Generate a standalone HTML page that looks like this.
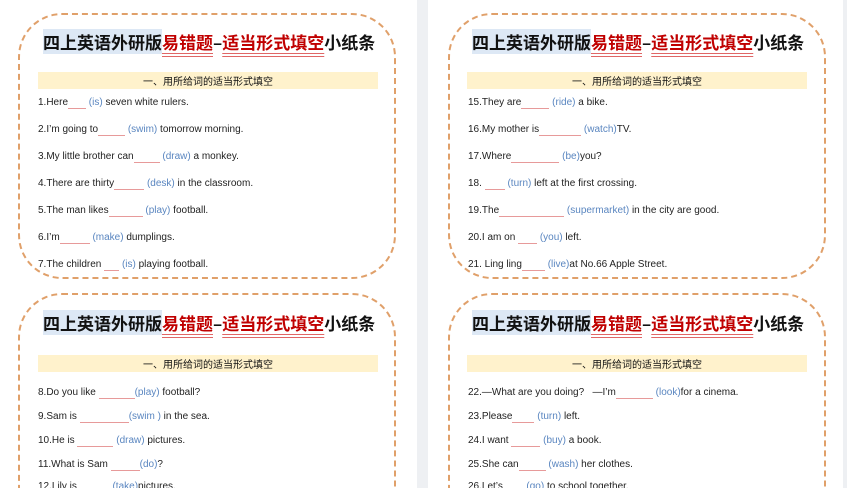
<!DOCTYPE html>
<html style="overflow:hidden;height:488px"><head><meta charset="utf-8"><style>
html,body{margin:0;width:847px;height:488px;overflow:hidden}
body{background:#eef0f3;position:relative;font-family:"Liberation Sans","Noto Sans CJK SC",sans-serif}
#wrap{position:absolute;left:0;top:0;width:847px;height:488px;overflow:hidden}
.page{position:absolute;top:0;height:488px;background:#fff}
.box{position:absolute;border:2px dashed #e0a06a;border-radius:44px;box-sizing:border-box}
.box.cut{height:195px;border-bottom:none;border-radius:44px 44px 0 0}
.title{position:absolute;top:26px;white-space:nowrap;font-weight:bold;font-size:17px;color:#111;line-height:30px;font-family:"Noto Sans CJK SC",sans-serif}
.title .hl{background:#dde8f5}
.title .r{color:#c00000;text-decoration:underline double #e06666;text-underline-offset:4px}
.bar{position:absolute;height:17px;background:#fff2cc;font-size:10px;line-height:17px;text-align:center;color:#111;font-family:"Noto Sans CJK SC",sans-serif}
.l{position:absolute;font-size:10px;color:#222;white-space:nowrap;line-height:12px}
.b{display:inline-block;border-bottom:1px solid #e79a9a;height:11px;vertical-align:bottom}
.w{color:#5a86c0}
</style></head><body><div id="wrap">
<div class="page" style="left:0;width:417px"></div>
<div class="page" style="left:428px;width:415px"></div>

<div class="box" style="left:18px;top:13px;width:378px;height:266px"></div>
<div class="title" style="left:43px;top:27px"><span class="hl">四上英语外研版</span><span class="r">易错题</span>–<span class="r">适当形式填空</span>小纸条</div>
<div class="bar" style="left:38px;top:72px;width:340px">一、用所给词的适当形式填空</div>
<div class="l" style="left:38px;top:97px">1.Here<span class="b" style="width:18px"></span> <span class="w">(is)</span> seven white rulers.</div>
<div class="l" style="left:38px;top:124px">2.I’m going to<span class="b" style="width:27px"></span> <span class="w">(swim)</span> tomorrow morning.</div>
<div class="l" style="left:38px;top:151px">3.My little brother can<span class="b" style="width:26px"></span> <span class="w">(draw)</span> a monkey.</div>
<div class="l" style="left:38px;top:178px">4.There are thirty<span class="b" style="width:30px"></span> <span class="w">(desk)</span> in the classroom.</div>
<div class="l" style="left:38px;top:205px">5.The man likes<span class="b" style="width:34px"></span> <span class="w">(play)</span> football.</div>
<div class="l" style="left:38px;top:232px">6.I’m<span class="b" style="width:30px"></span> <span class="w">(make)</span> dumplings.</div>
<div class="l" style="left:38px;top:259px">7.The children <span class="b" style="width:15px"></span> <span class="w">(is)</span> playing football.</div>

<div class="box cut" style="left:18px;top:293px;width:378px"></div>
<div class="title" style="left:43px;top:308px"><span class="hl">四上英语外研版</span><span class="r">易错题</span>–<span class="r">适当形式填空</span>小纸条</div>
<div class="bar" style="left:38px;top:355px;width:340px">一、用所给词的适当形式填空</div>
<div class="l" style="left:38px;top:387px">8.Do you like <span class="b" style="width:36px"></span><span class="w">(play)</span> football?</div>
<div class="l" style="left:38px;top:411px">9.Sam is <span class="b" style="width:49px"></span><span class="w">(swim )</span> in the sea.</div>
<div class="l" style="left:38px;top:435px">10.He is <span class="b" style="width:36px"></span> <span class="w">(draw)</span> pictures.</div>
<div class="l" style="left:38px;top:459px">11.What is Sam <span class="b" style="width:29px"></span><span class="w">(do)</span>?</div>
<div class="l" style="left:38px;top:480px;height:8px;overflow:hidden;line-height:14px">12.Lily is <span class="b" style="width:30px"></span> <span class="w">(take)</span>pictures.</div>

<div class="box" style="left:448px;top:13px;width:378px;height:266px"></div>
<div class="title" style="left:472px;top:27px"><span class="hl">四上英语外研版</span><span class="r">易错题</span>–<span class="r">适当形式填空</span>小纸条</div>
<div class="bar" style="left:467px;top:72px;width:340px">一、用所给词的适当形式填空</div>
<div class="l" style="left:468px;top:97px">15.They are<span class="b" style="width:28px"></span> <span class="w">(ride)</span> a bike.</div>
<div class="l" style="left:468px;top:124px">16.My mother is<span class="b" style="width:42px"></span> <span class="w">(watch)</span>TV.</div>
<div class="l" style="left:468px;top:151px">17.Where<span class="b" style="width:48px"></span> <span class="w">(be)</span>you?</div>
<div class="l" style="left:468px;top:178px">18. <span class="b" style="width:20px"></span> <span class="w">(turn)</span> left at the first crossing.</div>
<div class="l" style="left:468px;top:205px">19.The<span class="b" style="width:65px"></span> <span class="w">(supermarket)</span> in the city are good.</div>
<div class="l" style="left:468px;top:232px">20.I am on <span class="b" style="width:19px"></span> <span class="w">(you)</span> left.</div>
<div class="l" style="left:468px;top:259px">21. Ling ling<span class="b" style="width:23px"></span> <span class="w">(live)</span>at No.66 Apple Street.</div>

<div class="box cut" style="left:448px;top:293px;width:378px"></div>
<div class="title" style="left:472px;top:308px"><span class="hl">四上英语外研版</span><span class="r">易错题</span>–<span class="r">适当形式填空</span>小纸条</div>
<div class="bar" style="left:467px;top:355px;width:340px">一、用所给词的适当形式填空</div>
<div class="l" style="left:468px;top:387px">22.—What are you doing? &nbsp; —I’m<span class="b" style="width:37px"></span> <span class="w">(look)</span>for a cinema.</div>
<div class="l" style="left:468px;top:411px">23.Please<span class="b" style="width:22px"></span> <span class="w">(turn)</span> left.</div>
<div class="l" style="left:468px;top:435px">24.I want <span class="b" style="width:29px"></span> <span class="w">(buy)</span> a book.</div>
<div class="l" style="left:468px;top:459px">25.She can<span class="b" style="width:27px"></span> <span class="w">(wash)</span> her clothes.</div>
<div class="l" style="left:468px;top:480px;height:8px;overflow:hidden;line-height:14px">26.Let’s <span class="b" style="width:18px"></span> <span class="w">(go)</span> to school together.</div>
</div></body></html>
